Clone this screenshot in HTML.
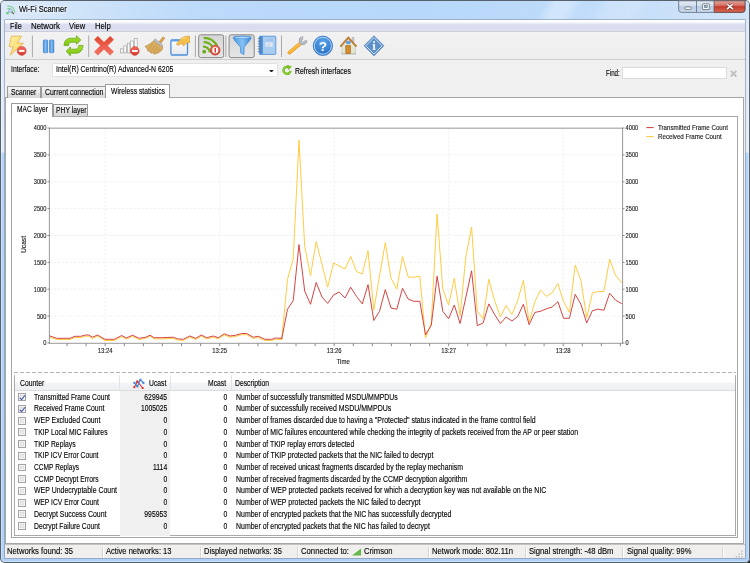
<!DOCTYPE html>
<html><head><meta charset="utf-8"><title>Wi-Fi Scanner</title>
<style>
*{box-sizing:border-box;margin:0;padding:0}
html,body{width:750px;height:563px;overflow:hidden;background:#fff}
body{font-family:"Liberation Sans",sans-serif;font-size:7.8px;color:#000;-webkit-text-stroke:.12px #000;position:relative}
.x{display:inline-block;transform:scale(.872,1.06);transform-origin:0 50%;white-space:nowrap}
.xr{display:inline-block;transform:scale(.872,1.06);transform-origin:100% 50%;white-space:nowrap}
.abs,#win div,#win span,svg{position:absolute}
#win{position:absolute;left:0;top:0;width:750px;height:563px;border-radius:5px 5px 5px 5px;overflow:hidden;will-change:transform;
 background:linear-gradient(180deg,#d9e8f8 0,#dceafb 20px,#e2edfb 152px,#b4d5f9 153.5px,#b1d2f8 563px);
 box-shadow:inset 0 0 0 1px #59616c, inset 0 0 0 1.8px rgba(255,255,255,.4)}
#corner{position:absolute;left:744px;top:557px;width:6px;height:6px;background:#1c1c1c}
#titleglass{left:1px;top:1px;width:748px;height:19px;border-radius:4px 4px 0 0;
 background:linear-gradient(119deg,transparent 476px,rgba(255,255,255,.3) 487px,rgba(255,255,255,.3) 499px,transparent 510px,transparent 522px,rgba(255,255,255,.16) 534px,rgba(255,255,255,.16) 556px,transparent 570px),linear-gradient(100deg,#dbe9f9 0,#d0e4f9 10%,#bcdafa 26%,#b7d8fa 55%,#bddbfa 75%,#cde2f9 92%,#d2e5f9 100%)}
#title{left:18.7px;top:5.2px;font-size:8.1px;transform:scale(.93,1.1);transform-origin:0 50%;color:#000;white-space:nowrap;text-shadow:0 0 3px #fff,0 0 4px #fff}
#client{left:5px;top:20px;width:740px;height:538px;background:#f0f0f0;box-shadow:0 0 0 .6px #8190a2}
#menubar{left:0;top:0;width:740px;height:12px;background:linear-gradient(180deg,#fff 0,#fcfcfe 16%,#eff1f8 28%,#dcdff0 38%,#d9dcee 72%,#dfe1f1 100%);border-bottom:1px solid #cbcdd9}
#menubar span{top:1.5px;font-size:8.1px;color:#000;transform:scaleX(.93);transform-origin:0 50%}
#toolbar{left:0;top:12px;width:740px;height:28px;background:linear-gradient(180deg,#f2f2f3 0,#eeeeef 100%);border-bottom:1px solid #cdcdcd}
.sep{top:3px;width:1px;height:22px;background:#b5b5b5}
.tbtn{top:2.5px;height:23px;border:1px solid #8c8c8c;border-radius:2px;background:linear-gradient(180deg,#d6d6d6,#e6e6e6)}
.lbl{white-space:nowrap;transform:scale(.872,1.06);transform-origin:0 50%}
#combo{left:47.2px;top:43px;width:225.4px;height:14.4px;background:#fff;border:1px solid #e0e0e0;border-radius:1.5px}
#find{left:617.4px;top:46.7px;width:104.5px;height:12.7px;background:#fff;border:1px solid #dadada}
.tab{height:11.5px;top:66px;border:1px solid #9a9a9a;border-bottom:none;background:linear-gradient(180deg,#f3f3f3 0,#ebebeb 50%,#dfdfdf 51%,#d9d9d9 100%);font-size:7.8px;white-space:nowrap;padding:1.2px 0 0 3.4px;border-radius:1px 1px 0 0}
.tab.sel{background:#fff;height:14px;top:64.3px;z-index:3}
#page{left:0;top:76.8px;width:738.9px;height:447.7px;background:#fff;border:1px solid #a6a6a6}
#inner{left:6px;top:96px;width:727.1px;height:421.8px;background:#fff;border:1px solid #a6a6a6}
#tbl{left:9px;top:354px;width:722px;height:162px;border:1px solid #a0a0a0;background:#fff}
#hdr{left:0;top:0;width:720px;height:15.5px;background:linear-gradient(180deg,#fff 0,#fff 45%,#f3f4f6 55%,#eeeff2 100%);border-bottom:1px solid #dcdcdc}
#hdr span{top:4.4px;font-size:7.8px;white-space:nowrap;transform:scale(.872,1.06);transform-origin:0 50%}
.hs{top:0!important;width:1px;height:15px;background:#e2e3ea;transform:none!important}
#sortcol{left:119.5px;top:390.5px;width:50.5px;height:145px;background:#f0f0f0}
.row{left:0;height:12px;width:735px;font-size:7.8px;white-space:nowrap}
.row span{top:1.5px;white-space:nowrap;transform:scale(.872,1.06);transform-origin:0 50%}
.cb{transform:none!important;left:18.2px;top:2.1px!important;width:8.3px;height:7.9px;border:.9px solid #a2a3a4;background:linear-gradient(135deg,#dcdcdc,#f2f2f2 60%,#fff);box-shadow:inset 0 0 0 1px #f4f4f4,inset 0 0 0 1.6px #d6d6d6}
.cb.on:after{content:"";position:absolute;left:1.9px;top:-.1px;width:2.2px;height:4.6px;border:solid #3a50b2;border-width:0 1.45px 1.45px 0;transform:rotate(40deg)}
.c1{left:34px;transform:scale(.858,1.06)!important}.c2{right:567.5px;text-align:right;transform-origin:100% 50%!important}.c3{right:507.8px;text-align:right;transform-origin:100% 50%!important}.c4{left:235.7px;transform:scale(.889,1.06)!important}
#splitter{left:14px;top:371.5px;width:722px;height:1px;background:repeating-linear-gradient(90deg,#b2b2b2 0,#b2b2b2 3.6px,transparent 3.6px,transparent 6px)}
#status{left:0;top:524px;width:740px;height:14px;background:#f0efee;border-top:1px solid #c2c2c2;font-size:8.6px}
#status span{top:1.1px;white-space:nowrap;color:#000;transform-origin:0 50%;-webkit-text-stroke:.12px #000}
#status i{position:absolute;top:1.5px;width:1px;height:11px;background:#d4d4d4;box-shadow:1px 0 0 #fff}
.chart{left:0;top:0;pointer-events:none}
</style></head><body>
<div id="corner"></div>
<div id="win">
<div id="titleglass"></div>
<svg id="appicon" style="left:5.5px;top:4.5px" width="10" height="10" viewBox="0 0 10 10"><path d="M1.2 1.2 Q8.6 .8 8.8 7.6" fill="none" stroke="#7ad486" stroke-width="1.15"/><path d="M1.2 3.6 Q6.2 3.4 6.4 7.6" fill="none" stroke="#7ad486" stroke-width="1.05"/><circle cx="4.4" cy="5.6" r="1.9" fill="#bfe0f2" stroke="#8aa2b4" stroke-width=".7"/><path d="M5.8 7 L8 9.2" stroke="#666" stroke-width="1.1"/><rect x=".4" y="7" width="2.3" height="2.2" fill="#62cf6e"/></svg>
<div id="title">Wi-Fi Scanner</div>
<div id="client">
 <div id="menubar"><span style="left:4.9px;transform:scale(.9,1.12)">File</span><span style="left:25.6px;transform:scale(.975,1.12)">Network</span><span style="left:64.1px;transform:scale(.93,1.12)">View</span><span style="left:89.8px;transform:scale(.95,1.12)">Help</span></div>
 <div id="toolbar"></div>
 <span class="lbl" style="left:5.9px;top:45.3px;font-size:7.8px">Interface:</span>
 <div id="combo"><span class="lbl" style="left:2.6px;top:1.4px;font-size:7.8px;transform:scale(.888,1.06)">Intel(R) Centrino(R) Advanced-N 6205</span>
  <svg style="right:2.5px;top:5.6px" width="4.8" height="2.8" viewBox="0 0 5 3"><path d="M0 0H5L2.5 3Z" fill="#222"/></svg></div>
 <svg style="left:276.8px;top:45.2px" width="10" height="10" viewBox="0 0 10 10"><path d="M8.5 5.8A3.5 3.5 0 1 1 6.4 2.1" fill="none" stroke="#62aa1a" stroke-width="2.3"/><path d="M8.5 5.8A3.5 3.5 0 1 1 6.4 2.1" fill="none" stroke="#8ad02a" stroke-width="1.4"/><path d="M5.2 .3L9.5 1.5L6.6 4.8Z" fill="#7cc420" stroke="#62aa1a" stroke-width=".4"/></svg>
 <span class="lbl" style="left:290.2px;top:46.6px;font-size:7.8px;transform:scale(.885,1.06)">Refresh interfaces</span>
 <span class="lbl" style="left:601px;top:49px;font-size:7.8px;transform:scale(.79,1.06)">Find:</span>
 <div id="find"></div>
 <svg style="left:725.4px;top:49.6px" width="7.2" height="7.4" viewBox="0 0 6 6" preserveAspectRatio="none"><path d="M.7 .7L5.3 5.3M5.3 .7L.7 5.3" stroke="#c0c0c0" stroke-width="1.6"/></svg>
 <svg id="tbsvg" style="left:-5px;top:-20px" width="750" height="62" viewBox="0 0 750 62">
<defs>
<linearGradient id="gy" x1="0" y1="0" x2="1" y2="1"><stop offset="0" stop-color="#fdf0a8"/><stop offset=".6" stop-color="#fbe078"/><stop offset="1" stop-color="#f6c95a"/></linearGradient>
<linearGradient id="gb" x1="0" y1="0" x2="1" y2="0"><stop offset="0" stop-color="#3c86d6"/><stop offset=".5" stop-color="#86c0f2"/><stop offset="1" stop-color="#3c86d6"/></linearGradient>
<linearGradient id="gg" x1="0" y1="0" x2="0" y2="1"><stop offset="0" stop-color="#a6de30"/><stop offset="1" stop-color="#7fc412"/></linearGradient>
<linearGradient id="gr" x1="0" y1="0" x2="0" y2="1"><stop offset="0" stop-color="#f26a5a"/><stop offset="1" stop-color="#d93a30"/></linearGradient>
<linearGradient id="gf" x1="0" y1="0" x2="1" y2="0"><stop offset="0" stop-color="#4697e4"/><stop offset=".5" stop-color="#86c2f4"/><stop offset="1" stop-color="#3a86da"/></linearGradient>
<radialGradient id="gh" cx=".5" cy=".3" r=".8"><stop offset="0" stop-color="#5aa6ec"/><stop offset="1" stop-color="#1f66bd"/></radialGradient>
<linearGradient id="gp" x1="0" y1="0" x2="0" y2="1"><stop offset="0" stop-color="#d6d6d6"/><stop offset="1" stop-color="#e6e6e6"/></linearGradient>
</defs>
<!-- separators -->
<g stroke="#a9a9a9" stroke-width="1"><path d="M32.4 35.5V57M88.7 35.5V57M195.4 35.5V57M225.9 35.5V57M281.5 35.5V57"/></g>
<!-- pressed buttons -->
<rect x="198.7" y="34.8" width="24.9" height="22.8" rx="2" fill="url(#gp)" stroke="#888" stroke-width="1"/>
<rect x="229.1" y="34.8" width="25.1" height="22.8" rx="2" fill="url(#gp)" stroke="#888" stroke-width="1"/>
<!-- 1 lightning + stop -->
<path d="M11.4 36.2L21.6 36.2L17.4 42.8L23.5 43.3L10.2 55.2L13.3 46.9L9.2 46.5Z" fill="url(#gy)" stroke="#e6ad48" stroke-width=".8" stroke-linejoin="round"/>
<circle cx="21.7" cy="50.9" r="4.5" fill="url(#gr)" stroke="#c53a30" stroke-width=".5"/><rect x="18.9" y="49.9" width="5.6" height="2" fill="#fff"/>
<!-- 2 pause -->
<rect x="43.3" y="39.9" width="4.4" height="12.9" rx=".8" fill="url(#gb)" stroke="#3277c8" stroke-width=".5"/>
<rect x="49.5" y="39.9" width="4.4" height="12.9" rx=".8" fill="url(#gb)" stroke="#3277c8" stroke-width=".5"/>
<!-- 3 refresh -->
<g fill="url(#gg)" stroke="#62a312" stroke-width=".7" stroke-linejoin="round">
<path d="M64 45.4C64.2 41.5 66 38.6 70 38.2H76.4V35.7L80.9 40L76.4 44.2V42.2H71C69.5 42.4 68.7 43.8 68.5 45.7Z"/>
<path d="M83.1 45.4C82.9 49.5 81 52.6 77 53.2H70.4V55.9L66.2 51.2L70.4 46.9V49.2H76C77.6 49 78.5 47.4 78.7 45.4Z"/>
</g>
<!-- 4 red X -->
<defs><linearGradient id="gx" x1="0" y1="0" x2="0" y2="1"><stop offset="0" stop-color="#e64a34"/><stop offset="1" stop-color="#f07060"/></linearGradient></defs>
<path d="M96 37.9L112 53.6M112 37.9L96 53.6" fill="none" stroke="url(#gx)" stroke-width="5.3" stroke-linecap="butt"/>
<!-- 5 signal bars + stop -->
<g fill="#fff" stroke="#a2a2a2" stroke-width=".7"><rect x="120.5" y="48.8" width="2.6" height="4.1"/><rect x="123.9" y="45.8" width="2.6" height="7.1"/><rect x="127.3" y="43.2" width="2.6" height="9.7"/><rect x="130.7" y="41" width="2.6" height="11.9"/><rect x="134.3" y="38.4" width="2.9" height="14.5"/></g>
<circle cx="134.8" cy="51" r="4.4" fill="url(#gr)" stroke="#c53a30" stroke-width=".5"/><rect x="132" y="50" width="5.6" height="2" fill="#fff"/>
<!-- 6 broom -->
<path d="M158.8 42L163 36.8L164.8 38.2L160.8 43.6Z" fill="#dba552" stroke="#b07c34" stroke-width=".5"/>
<path d="M154.6 39.8L162 45.8C164.4 48.6 160.4 53.2 154.2 54.2L152.4 52.8L150.8 53.2L149.6 51.2L147.8 51L147.4 49.2L145 46.4C148.6 45 152.4 42.6 154.6 39.8Z" fill="#d9ab5e" stroke="#b48840" stroke-width=".6" stroke-linejoin="round"/>
<path d="M152.4 44.2L148.6 49.6M155 45.8L151 51.6M157.6 47.4L153.6 53M159.8 48.8L156.4 53.4" stroke="#bb9048" stroke-width=".55"/>
<path d="M155.2 38.8L163 45.2L161.6 46.8L153.8 40.4Z" fill="#bfc3ca" stroke="#8f939b" stroke-width=".5"/>
<!-- 7 window + hand -->
<defs><linearGradient id="gw" x1="0" y1="0" x2="0" y2="1"><stop offset="0" stop-color="#fff"/><stop offset="1" stop-color="#e4e6ea"/></linearGradient></defs>
<rect x="170.9" y="39.8" width="16.6" height="15.2" rx="1.2" fill="url(#gw)" stroke="#4a8edc" stroke-width="1.3"/>
<rect x="171.2" y="39.6" width="16" height="1.9" fill="#5b9ee6"/>
<path d="M176.2 44.4L180.8 38.6L185 36.4L189.6 36.2V42.6L186.2 43.2L184 45.8L182.4 45L183 42.8L178.4 45.2Z" fill="#f5c04a" stroke="#d9962c" stroke-width=".6" stroke-linejoin="round"/>
<path d="M181.4 39.2L186 37.2" stroke="#fbe09a" stroke-width=".8"/>
<!-- 8 rss + alert -->
<circle cx="204.2" cy="51.7" r="1.9" fill="#6cad1c"/>
<g fill="none" stroke="#70b21e" stroke-width="2.3">
<path d="M203 46.7A6.3 6.3 0 0 1 209.9 52.4"/>
<path d="M203.6 42.2A10.8 10.8 0 0 1 212.6 46.9"/>
<path d="M203.6 37.8A15.3 15.3 0 0 1 217.2 45.9"/>
</g>
<circle cx="215.2" cy="50.2" r="4.9" fill="url(#gr)" stroke="#c0342b" stroke-width=".6"/><ellipse cx="215.2" cy="50.2" rx="3" ry="3.2" fill="#fff"/><rect x="214.5" y="47.9" width="1.5" height="4.6" fill="#d4382e"/>
<!-- 9 funnel -->
<path d="M233.2 37.6C233.2 35.8 251.2 35.8 251.2 37.6C251.2 39.4 245.6 45 244 47.6V54.6L240.6 52.8V47.6C239 45 233.2 39.4 233.2 37.6Z" fill="url(#gf)" stroke="#3580d4" stroke-width=".7" stroke-linejoin="round"/>
<ellipse cx="242.2" cy="37.5" rx="8.2" ry="1.2" fill="#b4d9f8" stroke="#3a85d6" stroke-width=".5"/>
<!-- 10 notebook -->
<rect x="259.4" y="36.2" width="16.4" height="18.2" rx=".8" fill="#a9ccef" stroke="#4b8cd4" stroke-width=".8"/>
<rect x="259.4" y="36.2" width="3.4" height="18.2" fill="#4a8cd8"/>
<rect x="265.6" y="42.4" width="7.2" height="4.2" fill="#eef4fb" stroke="#c4d8ee" stroke-width=".4"/>
<path d="M266.6 44H271.6M266.6 45.4H270.6" stroke="#9aaec4" stroke-width=".5"/>
<path d="M266 40H272.4" stroke="#86b2e2" stroke-width=".6"/>
<g stroke="#66788e" stroke-width=".9"><path d="M257.8 38.6H261M257.8 41.2H261M257.8 43.8H261M257.8 46.4H261M257.8 49H261M257.8 51.6H261"/></g>
<!-- 11 wrench -->
<path d="M289.4 52.6L300.2 43.6" stroke="#de9420" stroke-width="3.7" stroke-linecap="round"/>
<path d="M289.4 52.6L300.2 43.6" stroke="#f8ae2c" stroke-width="2.9" stroke-linecap="round"/>
<path d="M289.2 52L299.6 43.4" stroke="#fcd265" stroke-width=".9" stroke-linecap="round"/>
<path d="M305.70 40.56A2.7 2.7 0 1 1 303.14 38.00" fill="none" stroke="#8e939b" stroke-width="3.1"/>
<path d="M305.70 40.56A2.7 2.7 0 1 1 303.14 38.00" fill="none" stroke="#b9bdc4" stroke-width="2.3"/>
<path d="M300 44L301.4 42.6" stroke="#b0b4bb" stroke-width="2.6"/>
<!-- 12 help -->
<circle cx="322.9" cy="45.8" r="9.7" fill="url(#gh)" stroke="#2a6cc0" stroke-width=".7"/>
<circle cx="322.9" cy="45.8" r="8.5" fill="none" stroke="#b4d8f8" stroke-width="1"/>
<text x="322.9" y="50.7" text-anchor="middle" font-family="Liberation Sans,sans-serif" font-weight="bold" font-size="13.6" fill="#fff">?</text>
<!-- 13 home -->
<rect x="352" y="37.2" width="2" height="5" fill="#c9cbc6" stroke="#a3a59f" stroke-width=".4"/>
<rect x="341.4" y="52.6" width="14.6" height="2" rx=".6" fill="#b9bbb6"/>
<rect x="342" y="44.4" width="13.2" height="9.2" fill="#e0e7d2" stroke="#b4bba6" stroke-width=".5"/>
<path d="M342.2 45.4L348.4 38.6L354.8 45.4Z" fill="#e6ecda"/>
<path d="M340 46L348.3 36.6L356.8 46L355.8 46.9L348.3 38.7L341 46.9Z" fill="#c98236" stroke="#a8651e" stroke-width=".5" stroke-linejoin="round"/>
<rect x="346.4" y="41.2" width="3.8" height="2.6" rx=".4" fill="#5b9de0" stroke="#3f7cc0" stroke-width=".4"/>
<rect x="345.8" y="45.4" width="4.8" height="8.3" fill="#cf8424" stroke="#a9661a" stroke-width=".5"/>
<path d="M347.4 46.6V52.6M349 46.6V52.6" stroke="#e2a044" stroke-width=".5"/>
<!-- 14 info -->
<path d="M374 35.7L384 45.8L374 55.9L364 45.8Z" fill="#4f86c6" stroke="#3f74b4" stroke-width=".4" stroke-linejoin="round"/>
<path d="M374 37.5L382.2 45.8L374 54.1L365.8 45.8Z" fill="#5b90cb" stroke="#e4eef8" stroke-width=".9" stroke-linejoin="round"/>
<text x="374.1" y="50.3" text-anchor="middle" font-family="Liberation Serif,serif" font-weight="bold" font-size="13" fill="#f4f7fb">i</text>
</svg>

 <div id="page"></div>
 <div class="tab" style="left:1.6px;width:34px"><span class="x" style="position:static">Scanner</span></div>
 <div class="tab" style="left:35.6px;width:65.4px"><span class="x" style="position:static;transform:scale(.887,1.06)">Current connection</span></div>
 <div class="tab sel" style="left:100.2px;width:64.8px;padding-left:4.8px;padding-top:1.9px"><span class="x" style="position:static">Wireless statistics</span></div>
 <div id="inner"></div>
 <div class="tab sel" style="left:6px;top:83px;width:42px;height:14.3px;padding-left:4.7px;padding-top:1.1px"><span class="x" style="position:static;transform:scale(.852,1.06)">MAC layer</span></div>
 <div class="tab" style="left:47.6px;top:83.9px;width:35.6px;height:12.2px;padding-left:2.4px;padding-top:1.2px"><span class="x" style="position:static">PHY layer</span></div>
</div>
<svg class="chart" width="750" height="563" viewBox="0 0 750 563">
<style>.g{stroke:#eeeeee;stroke-width:.8;stroke-dasharray:2.6 1.4}.t{stroke:#7c7c7c;stroke-width:.9}.al{font:6.6px "Liberation Sans",sans-serif;fill:#1a1a1a;stroke:#1a1a1a;stroke-width:.12}</style>
<line x1="47.5" x2="49.5" y1="343.0" y2="343.0" class="t"/><line x1="622.5" x2="624.5" y1="343.0" y2="343.0" class="t"/><text transform="translate(46.4 345.4) scale(.86 1)" text-anchor="end" class="al">0</text><text transform="translate(625.6 345.4) scale(.86 1)" class="al">0</text><line x1="49.5" x2="622.5" y1="316.1" y2="316.1" class="g"/><line x1="47.5" x2="49.5" y1="316.1" y2="316.1" class="t"/><line x1="622.5" x2="624.5" y1="316.1" y2="316.1" class="t"/><text transform="translate(46.4 318.5) scale(.86 1)" text-anchor="end" class="al">500</text><text transform="translate(625.6 318.5) scale(.86 1)" class="al">500</text><line x1="49.5" x2="622.5" y1="289.2" y2="289.2" class="g"/><line x1="47.5" x2="49.5" y1="289.2" y2="289.2" class="t"/><line x1="622.5" x2="624.5" y1="289.2" y2="289.2" class="t"/><text transform="translate(46.4 291.6) scale(.86 1)" text-anchor="end" class="al">1000</text><text transform="translate(625.6 291.6) scale(.86 1)" class="al">1000</text><line x1="49.5" x2="622.5" y1="262.4" y2="262.4" class="g"/><line x1="47.5" x2="49.5" y1="262.4" y2="262.4" class="t"/><line x1="622.5" x2="624.5" y1="262.4" y2="262.4" class="t"/><text transform="translate(46.4 264.8) scale(.86 1)" text-anchor="end" class="al">1500</text><text transform="translate(625.6 264.8) scale(.86 1)" class="al">1500</text><line x1="49.5" x2="622.5" y1="235.5" y2="235.5" class="g"/><line x1="47.5" x2="49.5" y1="235.5" y2="235.5" class="t"/><line x1="622.5" x2="624.5" y1="235.5" y2="235.5" class="t"/><text transform="translate(46.4 237.9) scale(.86 1)" text-anchor="end" class="al">2000</text><text transform="translate(625.6 237.9) scale(.86 1)" class="al">2000</text><line x1="49.5" x2="622.5" y1="208.6" y2="208.6" class="g"/><line x1="47.5" x2="49.5" y1="208.6" y2="208.6" class="t"/><line x1="622.5" x2="624.5" y1="208.6" y2="208.6" class="t"/><text transform="translate(46.4 211.0) scale(.86 1)" text-anchor="end" class="al">2500</text><text transform="translate(625.6 211.0) scale(.86 1)" class="al">2500</text><line x1="49.5" x2="622.5" y1="181.8" y2="181.8" class="g"/><line x1="47.5" x2="49.5" y1="181.8" y2="181.8" class="t"/><line x1="622.5" x2="624.5" y1="181.8" y2="181.8" class="t"/><text transform="translate(46.4 184.2) scale(.86 1)" text-anchor="end" class="al">3000</text><text transform="translate(625.6 184.2) scale(.86 1)" class="al">3000</text><line x1="49.5" x2="622.5" y1="154.9" y2="154.9" class="g"/><line x1="47.5" x2="49.5" y1="154.9" y2="154.9" class="t"/><line x1="622.5" x2="624.5" y1="154.9" y2="154.9" class="t"/><text transform="translate(46.4 157.3) scale(.86 1)" text-anchor="end" class="al">3500</text><text transform="translate(625.6 157.3) scale(.86 1)" class="al">3500</text><line x1="47.5" x2="49.5" y1="128.0" y2="128.0" class="t"/><line x1="622.5" x2="624.5" y1="128.0" y2="128.0" class="t"/><text transform="translate(46.4 130.4) scale(.86 1)" text-anchor="end" class="al">4000</text><text transform="translate(625.6 130.4) scale(.86 1)" class="al">4000</text><line x1="105.2" x2="105.2" y1="128.5" y2="343" class="g"/><text transform="translate(105.2 353.1) scale(.9 1)" text-anchor="middle" class="al">13:24</text><line x1="219.7" x2="219.7" y1="128.5" y2="343" class="g"/><text transform="translate(219.7 353.1) scale(.9 1)" text-anchor="middle" class="al">13:25</text><line x1="334.2" x2="334.2" y1="128.5" y2="343" class="g"/><text transform="translate(334.2 353.1) scale(.9 1)" text-anchor="middle" class="al">13:26</text><line x1="448.7" x2="448.7" y1="128.5" y2="343" class="g"/><text transform="translate(448.7 353.1) scale(.9 1)" text-anchor="middle" class="al">13:27</text><line x1="563.2" x2="563.2" y1="128.5" y2="343" class="g"/><text transform="translate(563.2 353.1) scale(.9 1)" text-anchor="middle" class="al">13:28</text>
<rect x="49.3" y="128.3" width="573.2" height="215" fill="none" stroke="#a2a2a2" stroke-width="0"/>
<line x1="49" x2="623" y1="128.2" y2="128.2" stroke="#b8b8b8" stroke-width="1.6"/>
<polyline points="49.5,336.7 50.0,337.2 56.7,339.5 70.0,339.5 75.0,337.5 80.8,337.5 85.8,336.2 88.7,336.2 92.5,338.4 97.5,336.2 105.0,340.5 114.2,340.5 121.7,336.7 126.3,339.2 132.5,336.4 139.2,339.5 145.8,338.4 150.0,336.4 154.2,338.9 161.7,338.9 173.3,338.4 177.5,340.0 183.3,340.5 189.7,337.2 195.8,339.5 201.3,336.2 206.7,338.9 213.3,337.2 218.3,338.9 224.2,335.0 230.0,337.2 235.8,336.4 241.7,334.7 246.7,334.7 253.3,338.4 258.3,337.5 265.0,340.5 271.7,340.5 275.8,339.2 281.7,339.5 281.7,340.0 287.5,279.3 293.2,259.0 299.0,140.2 304.7,246.3 310.5,275.7 316.2,241.6 322.0,264.4 327.7,287.2 333.5,263.0 339.2,266.0 345.0,269.0 350.7,256.5 356.5,271.5 362.3,274.0 368.0,250.6 373.8,310.2 379.5,276.0 385.3,242.7 391.0,278.3 396.8,289.0 402.5,256.5 408.3,277.2 414.0,277.2 419.8,276.2 425.5,338.0 431.3,323.0 437.1,214.0 442.8,289.0 448.6,305.0 454.3,278.3 460.1,315.6 465.8,257.0 471.6,227.0 477.3,311.3 483.1,318.8 488.8,279.3 494.6,300.7 500.4,316.6 506.1,305.6 511.9,314.5 517.6,300.7 523.4,280.4 529.1,322.0 534.9,301.7 540.6,290.0 546.4,296.4 552.1,292.8 557.9,283.6 563.6,301.7 569.4,312.4 575.2,265.0 580.9,280.4 586.7,317.7 592.4,293.2 598.2,291.5 603.9,291.5 609.7,259.1 615.4,275.0 621.2,282.1 622.3,282.4" fill="none" stroke="#ffc83a" stroke-width="0.95" stroke-linejoin="round"/>
<polyline points="49.5,335.5 50.0,336.0 56.7,338.3 70.0,338.3 75.0,336.3 80.8,336.3 85.8,335.0 88.7,335.0 92.5,337.2 97.5,335.0 105.0,339.3 114.2,339.3 121.7,335.5 126.3,338.0 132.5,335.2 139.2,338.3 145.8,337.2 150.0,335.2 154.2,337.7 161.7,337.7 173.3,337.2 177.5,338.8 183.3,339.3 189.7,336.0 195.8,338.3 201.3,335.0 206.7,337.7 213.3,336.0 218.3,337.7 224.2,333.8 230.0,336.0 235.8,335.2 241.7,333.5 246.7,333.5 253.3,337.2 258.3,336.3 265.0,339.3 271.7,339.3 275.8,338.0 281.7,338.3 281.7,339.0 287.5,309.2 293.2,300.7 299.0,244.6 304.7,291.0 310.5,304.3 316.2,282.5 322.0,297.0 327.7,303.4 333.5,295.0 339.2,292.0 345.0,298.0 350.7,287.2 356.5,296.4 362.3,303.9 368.0,284.7 373.8,320.5 379.5,311.3 385.3,289.6 391.0,308.0 396.8,309.2 402.5,288.3 408.3,299.2 414.0,301.3 419.8,301.3 425.5,334.8 431.3,325.2 437.1,276.2 442.8,311.3 448.6,318.8 454.3,305.0 460.1,323.5 465.8,297.5 471.6,270.8 477.3,325.6 483.1,323.0 488.8,303.9 494.6,314.5 500.4,323.5 506.1,317.0 511.9,321.0 517.6,316.6 523.4,304.3 529.1,324.7 534.9,312.4 540.6,311.3 546.4,308.8 552.1,307.0 557.9,301.7 563.6,318.3 569.4,318.3 575.2,294.3 580.9,304.3 586.7,323.0 592.4,310.7 598.2,309.2 603.9,310.2 609.7,293.2 615.4,300.0 621.2,303.4 622.3,303.7" fill="none" stroke="#d23a3a" stroke-width="0.95" stroke-linejoin="round"/>
<line x1="49.4" x2="49.4" y1="128" y2="343.6" stroke="#8c8c8c" stroke-width="0.9"/>
<line x1="622.6" x2="622.6" y1="128" y2="343.6" stroke="#8c8c8c" stroke-width="0.9"/>
<line x1="49" x2="623" y1="343.3" y2="343.3" stroke="#8c8c8c" stroke-width="0.9"/>
<line x1="67.0" x2="67.0" y1="343.5" y2="346.2" class="t"/><line x1="86.1" x2="86.1" y1="343.5" y2="346.2" class="t"/><line x1="105.2" x2="105.2" y1="343.5" y2="346.2" class="t"/><line x1="124.3" x2="124.3" y1="343.5" y2="346.2" class="t"/><line x1="143.4" x2="143.4" y1="343.5" y2="346.2" class="t"/><line x1="162.4" x2="162.4" y1="343.5" y2="346.2" class="t"/><line x1="181.5" x2="181.5" y1="343.5" y2="346.2" class="t"/><line x1="200.6" x2="200.6" y1="343.5" y2="346.2" class="t"/><line x1="219.7" x2="219.7" y1="343.5" y2="346.2" class="t"/><line x1="238.8" x2="238.8" y1="343.5" y2="346.2" class="t"/><line x1="257.9" x2="257.9" y1="343.5" y2="346.2" class="t"/><line x1="276.9" x2="276.9" y1="343.5" y2="346.2" class="t"/><line x1="296.0" x2="296.0" y1="343.5" y2="346.2" class="t"/><line x1="315.1" x2="315.1" y1="343.5" y2="346.2" class="t"/><line x1="334.2" x2="334.2" y1="343.5" y2="346.2" class="t"/><line x1="353.3" x2="353.3" y1="343.5" y2="346.2" class="t"/><line x1="372.4" x2="372.4" y1="343.5" y2="346.2" class="t"/><line x1="391.4" x2="391.4" y1="343.5" y2="346.2" class="t"/><line x1="410.5" x2="410.5" y1="343.5" y2="346.2" class="t"/><line x1="429.6" x2="429.6" y1="343.5" y2="346.2" class="t"/><line x1="448.7" x2="448.7" y1="343.5" y2="346.2" class="t"/><line x1="467.8" x2="467.8" y1="343.5" y2="346.2" class="t"/><line x1="486.9" x2="486.9" y1="343.5" y2="346.2" class="t"/><line x1="505.9" x2="505.9" y1="343.5" y2="346.2" class="t"/><line x1="525.0" x2="525.0" y1="343.5" y2="346.2" class="t"/><line x1="544.1" x2="544.1" y1="343.5" y2="346.2" class="t"/><line x1="563.2" x2="563.2" y1="343.5" y2="346.2" class="t"/><line x1="582.3" x2="582.3" y1="343.5" y2="346.2" class="t"/><line x1="601.4" x2="601.4" y1="343.5" y2="346.2" class="t"/><line x1="620.4" x2="620.4" y1="343.5" y2="346.2" class="t"/>
<text transform="translate(343.2 363.8) scale(.92 1)" text-anchor="middle" class="al">Time</text>
<text transform="translate(26.2 244.5) rotate(-90) scale(1.02 1)" text-anchor="middle" class="al">Ucast</text>
<line x1="646.4" x2="653.6" y1="127.6" y2="127.6" stroke="#d23a3a" stroke-width="1"/>
<line x1="646.4" x2="653.6" y1="136.6" y2="136.6" stroke="#ffc83a" stroke-width="1"/>
<text transform="translate(658 130) scale(.935 1)" class="al">Transmitted Frame Count</text>
<text transform="translate(658 139) scale(.94 1)" class="al">Received Frame Count</text>
</svg>
<div id="splitter"></div>
<div id="tblwrap" style="left:14px;top:374.5px;width:722px;height:161.5px;border:1px solid #a9a9a9;border-top-color:#c4c4c4;background:#fff"></div>
<div id="sortcol"></div>
<div id="hdrw" style="left:15px;top:375px;width:720px;height:15.5px">
 <div id="hdr"><span style="left:4.8px">Counter</span>
 <span class="hs" style="left:104.4px"></span>
 <span style="left:133.6px">Ucast</span><span class="hs" style="left:155px"></span>
 <span style="left:193px">Mcast</span><span class="hs" style="left:216px"></span>
 <span style="left:220px">Description</span>
 <svg style="left:117.6px;top:3px" width="12" height="11" viewBox="132.6 377.6 12 11"><path d="M133.9 386.8L137 381L142.3 387.6" fill="none" stroke="#e0302a" stroke-width="1.1"/><path d="M134 382.4L137 386L140 379.4L143 382.4" fill="none" stroke="#3a84d8" stroke-width="1.1"/><g fill="#e0302a"><circle cx="133.9" cy="386.8" r="1.1"/><circle cx="137" cy="381" r="1.2"/><circle cx="142.3" cy="387.6" r="1.1"/></g><g fill="#3a84d8"><rect x="133" y="381.4" width="2" height="2"/><rect x="136" y="385" width="2" height="2"/><rect x="139" y="378.4" width="2" height="2"/><rect x="142" y="381.4" width="2" height="2"/></g></svg>
 </div>
</div>
<div class="row" style="top:391.10px"><span class="cb on"></span><span class="c1" style="transform:scale(0.858,1.06)!important">Transmitted Frame Count</span><span class="c2">629945</span><span class="c3">0</span><span class="c4" style="transform:scale(0.889,1.06)!important">Number of successfully transmitted MSDU/MMPDUs</span></div>
<div class="row" style="top:402.83px"><span class="cb on"></span><span class="c1" style="transform:scale(0.878,1.06)!important">Received Frame Count</span><span class="c2">1005025</span><span class="c3">0</span><span class="c4" style="transform:scale(0.898,1.06)!important">Number of successfully received MSDU/MMPDUs</span></div>
<div class="row" style="top:414.56px"><span class="cb"></span><span class="c1" style="transform:scale(0.887,1.06)!important">WEP Excluded Count</span><span class="c2">0</span><span class="c3">0</span><span class="c4" style="transform:scale(0.89,1.06)!important">Number of frames discarded due to having a &quot;Protected&quot; status indicated in the frame control field</span></div>
<div class="row" style="top:426.29px"><span class="cb"></span><span class="c1" style="transform:scale(0.872,1.06)!important">TKIP Local MIC Failures</span><span class="c2">0</span><span class="c3">0</span><span class="c4" style="transform:scale(0.888,1.06)!important">Number of MIC failures encountered while checking the integrity of packets received from the AP or peer station</span></div>
<div class="row" style="top:438.02px"><span class="cb"></span><span class="c1" style="transform:scale(0.875,1.06)!important">TKIP Replays</span><span class="c2">0</span><span class="c3">0</span><span class="c4" style="transform:scale(0.885,1.06)!important">Number of TKIP replay errors detected</span></div>
<div class="row" style="top:449.75px"><span class="cb"></span><span class="c1" style="transform:scale(0.862,1.06)!important">TKIP ICV Error Count</span><span class="c2">0</span><span class="c3">0</span><span class="c4" style="transform:scale(0.896,1.06)!important">Number of TKIP protected packets that the NIC failed to decrypt</span></div>
<div class="row" style="top:461.48px"><span class="cb"></span><span class="c1" style="transform:scale(0.847,1.06)!important">CCMP Replays</span><span class="c2">1114</span><span class="c3">0</span><span class="c4" style="transform:scale(0.885,1.06)!important">Number of received unicast fragments discarded by the replay mechanism</span></div>
<div class="row" style="top:473.21px"><span class="cb"></span><span class="c1" style="transform:scale(0.857,1.06)!important">CCMP Decrypt Errors</span><span class="c2">0</span><span class="c3">0</span><span class="c4" style="transform:scale(0.884,1.06)!important">Number of received fragments discarded by the CCMP decryption algorithm</span></div>
<div class="row" style="top:484.94px"><span class="cb"></span><span class="c1" style="transform:scale(0.892,1.06)!important">WEP Undecryptable Count</span><span class="c2">0</span><span class="c3">0</span><span class="c4" style="transform:scale(0.899,1.06)!important">Number of WEP protected packets received for which a decryption key was not available on the NIC</span></div>
<div class="row" style="top:496.67px"><span class="cb"></span><span class="c1" style="transform:scale(0.863,1.06)!important">WEP ICV Error Count</span><span class="c2">0</span><span class="c3">0</span><span class="c4" style="transform:scale(0.897,1.06)!important">Number of WEP protected packets the NIC failed to decrypt</span></div>
<div class="row" style="top:508.40px"><span class="cb"></span><span class="c1" style="transform:scale(0.89,1.06)!important">Decrypt Success Count</span><span class="c2">995953</span><span class="c3">0</span><span class="c4" style="transform:scale(0.894,1.06)!important">Number of encrypted packets that the NIC has successfully decrypted</span></div>
<div class="row" style="top:520.13px"><span class="cb"></span><span class="c1" style="transform:scale(0.87,1.06)!important">Decrypt Failure Count</span><span class="c2">0</span><span class="c3">0</span><span class="c4" style="transform:scale(0.891,1.06)!important">Number of encrypted packets that the NIC has failed to decrypt</span></div>

<div id="client2" style="left:5px;top:20px;width:740px;height:538px">
 <div id="status">
  <span style="left:2.0px;transform:scaleX(0.891)">Networks found: 35</span><i style="left:97px"></i>
  <span style="left:101.0px;transform:scaleX(0.879)">Active networks: 13</span><i style="left:194.6px"></i>
  <span style="left:198.5px;transform:scaleX(0.878)">Displayed networks: 35</span><i style="left:291.6px"></i>
  <span style="left:295.5px;transform:scaleX(0.897)">Connected to:</span>
  <svg style="left:346.5px;top:3px" width="9.5" height="7.6" viewBox="0 0 9 8" preserveAspectRatio="none"><path d="M0 8L9 0V8Z" fill="#63b84c"/></svg>
  <span style="left:359.0px;transform:scaleX(0.891)">Crimson</span><i style="left:422.6px"></i>
  <span style="left:426.5px;transform:scaleX(0.894)">Network mode: 802.11n</span><i style="left:519.8px"></i>
  <span style="left:524.0px;transform:scaleX(0.893)">Signal strength: -48 dBm</span><i style="left:617.4px"></i>
  <span style="left:621.5px;transform:scaleX(0.882)">Signal quality: 99%</span><i style="left:716.6px"></i>
  <svg style="left:730px;top:4.5px" width="9" height="9" viewBox="0 0 9 9"><g fill="#c4c4c4"><rect x="6" y="0.6" width="1.6" height="1.6"/><rect x="3.3" y="3.3" width="1.6" height="1.6"/><rect x="6" y="3.3" width="1.6" height="1.6"/><rect x=".6" y="6" width="1.6" height="1.6"/><rect x="3.3" y="6" width="1.6" height="1.6"/><rect x="6" y="6" width="1.6" height="1.6"/></g></svg>
 </div>
</div>
<svg id="capbtn" style="left:676px;top:0" width="72" height="15" viewBox="676 0 72 15">
<defs><linearGradient id="cg1" x1="0" y1="0" x2="0" y2="1"><stop offset="0" stop-color="#e6eef7"/><stop offset=".45" stop-color="#d0ddec"/><stop offset=".5" stop-color="#b8cbe2"/><stop offset="1" stop-color="#c8daee"/></linearGradient>
<linearGradient id="cg2" x1="0" y1="0" x2="0" y2="1"><stop offset="0" stop-color="#e7a99f"/><stop offset=".45" stop-color="#d4675a"/><stop offset=".5" stop-color="#c4392b"/><stop offset="1" stop-color="#d86a52"/></linearGradient></defs>
<path d="M678.7 .8V9.6Q678.7 12.4 681.5 12.4H742.2Q745 12.4 745 9.6V.8Z" fill="url(#cg1)" stroke="#5f6b7a" stroke-width=".8"/>
<path d="M714.1 .8V12.4H742.2Q745 12.4 745 9.6V.8Z" fill="url(#cg2)" stroke="#5f4a4a" stroke-width=".8"/>
<path d="M696.5 .8V12.4" stroke="#5f6b7a" stroke-width=".8"/>
<rect x="685" y="7" width="6.2" height="2.4" rx=".5" fill="#fff" stroke="#4f5966" stroke-width=".7"/>
<rect x="702.6" y="3.8" width="6.7" height="5.7" rx=".5" fill="#fff" stroke="#4f5966" stroke-width=".7"/><rect x="704.5" y="5.6" width="2.9" height="2.1" fill="#9db2cc" stroke="#4f5966" stroke-width=".5"/>
<path d="M727 4L733 9.2M733 4L727 9.2" stroke="#5a2a26" stroke-width="2.6"/><path d="M727 4L733 9.2M733 4L727 9.2" stroke="#fff" stroke-width="1.6"/>
</svg>
</div>
</body></html>
